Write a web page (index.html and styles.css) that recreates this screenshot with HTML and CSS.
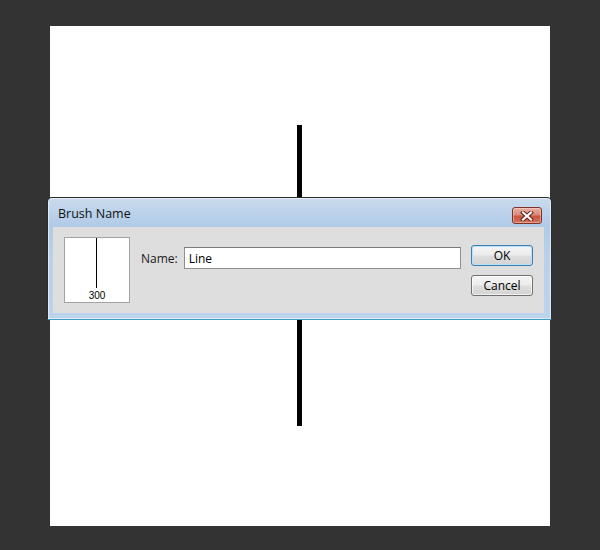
FILE: index.html
```html
<!DOCTYPE html>
<html>
<head>
<meta charset="utf-8">
<link rel="stylesheet" href="styles.css">
</head>
<body>
<div class="stage">
  <div class="canvas">
    <div class="stroke"></div>
  </div>
  <div class="dialog">
    <div class="titlebar">
      <span class="title">Brush Name</span>
      <button class="close" aria-label="Close">
        <svg width="14" height="10" viewBox="0 0 14 10">
          <path d="M3 1.5 L11 8.5 M11 1.5 L3 8.5" stroke="#5a1a12" stroke-width="4" stroke-linecap="square" fill="none"/>
          <path d="M3 1.5 L11 8.5 M11 1.5 L3 8.5" stroke="#ffffff" stroke-width="2.2" stroke-linecap="square" fill="none"/>
        </svg>
      </button>
    </div>
    <div class="content">
      <div class="preview">
        <div class="preview-line"></div>
        <div class="preview-size">300</div>
      </div>
      <div class="field">
        <label class="label" for="bn">Name:</label>
        <input id="bn" class="input" type="text" value="Line">
      </div>
      <div class="buttons">
        <button class="btn btn-default">OK</button>
        <button class="btn">Cancel</button>
      </div>
    </div>
  </div>
</div>
</body>
</html>
```

FILE: styles.css
```css
html, body {
  margin: 0;
  padding: 0;
  background: #333333;
}

.stage {
  position: relative;
  width: 600px;
  height: 550px;
  padding-top: 26px;
  box-sizing: border-box;
}

.canvas {
  margin-left: 50px;
  width: 500px;
  height: 500px;
  background: #ffffff;
  padding-top: 99px;
  box-sizing: border-box;
}

.stroke {
  margin-left: 247px;
  width: 5px;
  height: 301px;
  background: #000000;
}

.dialog {
  position: absolute;
  left: 47px;
  top: 197px;
  width: 505px;
  height: 123px;
  box-sizing: border-box;
  border: 1px solid #2b2b2b;
  border-bottom-color: #3c9fc3;
  border-radius: 5px 5px 0 0;
  background: linear-gradient(to bottom, #c9dbee 0px, #b0cae7 28px, #b9d1eb 60px, #bcd3ec 100%);
  box-shadow: inset 0 0 0 1px rgba(255, 255, 255, 0.55);
  padding: 0 7px 6px 5px;
  font-family: "Open Sans", "Noto Sans", sans-serif;
  font-size: 12px;
  color: #1a1a1a;
}

.titlebar {
  height: 29px;
  display: flex;
  align-items: flex-start;
  justify-content: space-between;
}

.title {
  margin-top: 8px;
  margin-left: 5px;
  line-height: 16px;
  font-size: 12.5px;
  color: #111111;
}

.close {
  margin-top: 9px;
  margin-right: 2px;
  width: 30px;
  height: 17px;
  padding: 0;
  border: 1px solid #7e3126;
  border-radius: 3px;
  background: linear-gradient(to bottom, #eab3a6 0%, #d98a7a 45%, #c75640 55%, #d0745c 100%);
  box-shadow: inset 0 0 0 1px rgba(255, 220, 210, 0.45);
  display: flex;
  align-items: center;
  justify-content: center;
}

.content {
  height: 86px;
  box-sizing: border-box;
  background: #dedede;
  display: flex;
  align-items: flex-start;
  padding: 10px 11px 0 11px;
}

.preview {
  width: 66px;
  height: 66px;
  box-sizing: border-box;
  border: 1px solid #a3a3a3;
  background: #ffffff;
  display: flex;
  flex-direction: column;
  align-items: center;
}

.preview-line {
  width: 1px;
  height: 50px;
  background: #000000;
  margin-left: -1px;
}

.preview-size {
  margin-top: 2px;
  font-family: "Liberation Sans", Arial, sans-serif;
  font-size: 10px;
  line-height: 11px;
  color: #000000;
}

.field {
  flex: 1;
  display: flex;
  align-items: center;
  margin-left: 11px;
  margin-top: 10px;
}

.label {
  margin-right: 6px;
  color: #1a1a1a;
  font-size: 12px;
}

.input {
  flex: 1;
  min-width: 0;
  height: 22px;
  box-sizing: border-box;
  border: 1px solid #8e8f8f;
  border-top-color: #7a7a7a;
  background: #ffffff;
  padding: 0 4px;
  font-family: "Open Sans", "Noto Sans", sans-serif;
  font-size: 12px;
  color: #000000;
  outline: none;
}

.buttons {
  margin-left: 10px;
  margin-top: 8px;
  display: flex;
  flex-direction: column;
  gap: 9px;
}

.btn {
  width: 62px;
  height: 21px;
  box-sizing: border-box;
  padding: 0;
  border: 1px solid #707070;
  border-radius: 3px;
  background: linear-gradient(to bottom, #f4f4f4 0%, #ececec 48%, #dedede 52%, #d3d3d3 100%);
  box-shadow: inset 0 0 0 1px rgba(255, 255, 255, 0.7);
  font-family: "Open Sans", "Noto Sans", sans-serif;
  font-size: 12px;
  line-height: 17px;
  color: #000000;
}

.btn-default {
  border-color: #3c7fb1;
  box-shadow: inset 0 0 0 1px #b7e2f8;
}
```
